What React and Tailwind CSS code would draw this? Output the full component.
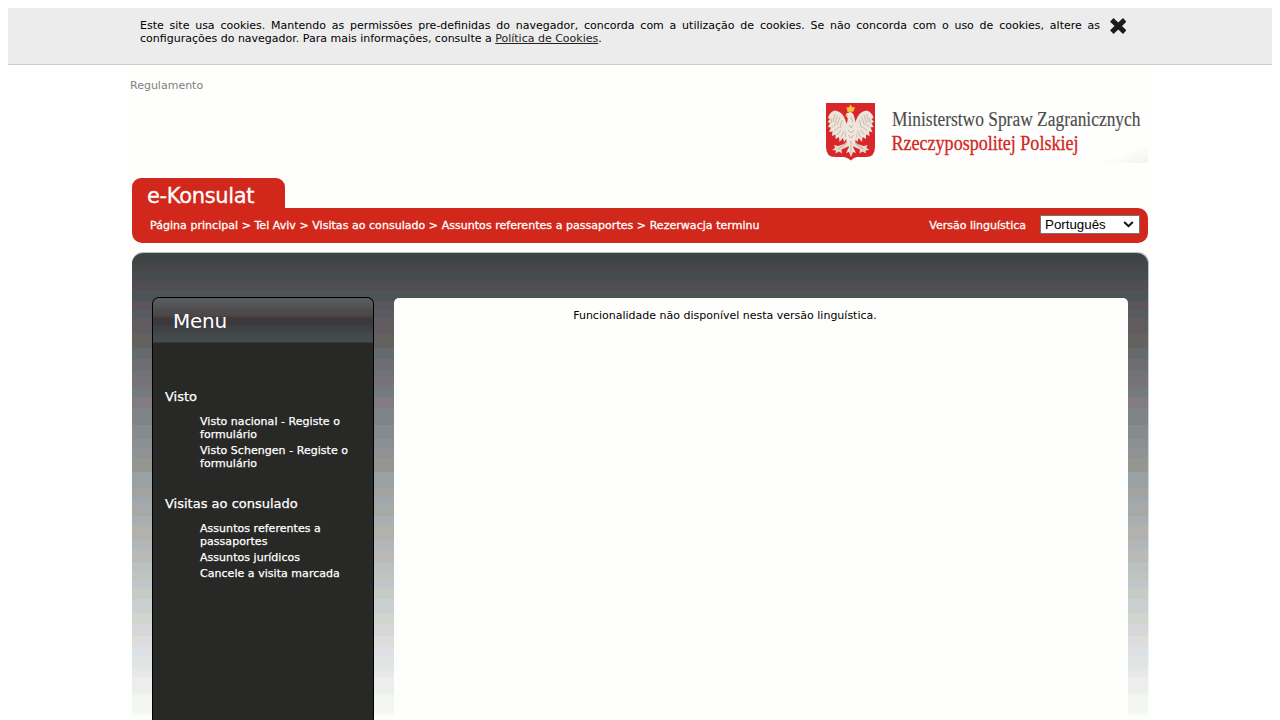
import React from "react";

const BANDS = [
  [253, "#3e4345"], [261, "#424648"], [265, "#4a4645"], [269, "#444a4b"], [273, "#474d4e"],
  [281, "#514d50"], [290, "#4e5456"], [301, "#5a565b"], [310, "#565c5f"], [318, "#605c5f"],
  [334, "#63625e"], [348, "#646a6d"], [359, "#6b6f72"], [363, "#706d72"], [370, "#6e7376"],
  [377, "#777378"], [387, "#747b7d"], [397, "#827c82"], [408, "#7f8586"], [425, "#868c8e"],
  [439, "#8b9092"], [448, "#909396"], [458, "#959690"], [472, "#9aa1a3"], [487, "#a2a39e"],
  [496, "#9fa6a9"], [501, "#a3a9ad"], [508, "#a8a9a5"], [516, "#a8aeb1"], [525, "#b1b2ae"],
  [540, "#b0b7bb"], [549, "#b9bab6"], [562, "#bbc1c3"], [571, "#c1c3be"], [580, "#c0c6c9"],
  [588, "#c8cac6"], [599, "#cacfd1"], [613, "#d2d4d0"], [624, "#d2d7da"], [628, "#d9d6db"],
  [636, "#dbddd9"], [643, "#e0dde2"], [649, "#dce2e5"], [657, "#e2e4e0"], [667, "#e2e8ea"],
  [672, "#e9e7ec"], [677, "#eceeeb"], [693, "#ebf2f5"], [695, "#f4f7f1"], [713, "#f6fcff"],
  [716, "#fefefc"], [720, "#fefefc"],
];

const panelGradient =
  "linear-gradient(to bottom, " +
  BANDS.slice(0, -1)
    .map(([y, c], i) => `${c} ${y - 253}px ${BANDS[i + 1][0] - 253}px`)
    .join(", ") +
  ")";

const MENU = [
  {
    title: "Visto",
    items: ["Visto nacional - Registe o formulário", "Visto Schengen - Registe o formulário"],
  },
  {
    title: "Visitas ao consulado",
    items: ["Assuntos referentes a passaportes", "Assuntos jurídicos", "Cancele a visita marcada"],
  },
];

function Wing() {
  return (
    <g>
      <path
        d="M23 27C21 22 20 18 18 14C16 10 13 8 9 7.500C5 8.500 3 11 2 15L4 16L1.500 19L4 20L2 24L5 24.500L3 29L6.500 28.500L6 33L9.500 31.500L9.500 36L13 34L13.500 39L17 35L18 39L21 35L23 36Z"
        fill="#ece4da"
      />
      <path
        d="M6 15L5 20M9 11L7 19M11.500 12L9 20M14 14L11 22M16 17L14 25M6 24L10 21M8 28L13 24M11 32L15 27M15 34L18 28M19 34L20 29"
        fill="none"
        stroke="#bda898"
        strokeWidth=".7"
      />
      <path d="M22 37L18 41L12 43L8 42L9 45L6 47L10 47.500L9.500 50.500L13 48.500L16 50.500L15.500 46.500L20 44.500L23.500 43Z" fill="#e5dbcf" />
      <path d="M21 39L17 43L12 46" fill="none" stroke="#b08b77" strokeWidth=".7" />
    </g>
  );
}

function MinistryLogo() {
  return (
    <svg width="326" height="62" viewBox="0 0 326 62" className="block">
      <defs>
        <linearGradient id="corner" x1="0.35" y1="0.2" x2="1" y2="1">
          <stop offset="0.5" stopColor="#fefefc" />
          <stop offset="1" stopColor="#f2f2f0" />
        </linearGradient>
      </defs>
      <path d="M326 32V60H262Q310 58 326 32Z" fill="url(#corner)" />
      <g transform="translate(4 0)">
        <path d="M0 0H49V44Q49 54 40 54H31Q27 54.500 25 57.500Q22 54.500 18 54H9Q0 54 0 44Z" fill="#d9262b" />
        <Wing />
        <g transform="translate(49.500 0) scale(-1 1)">
          <Wing />
        </g>
        <path
          d="M22 10C20 10 19 12 21 14C23 17 20 20 20 25V35C20 38 22 41 23 44L20 50L23 49L25 54L27 49L30 50L27 44C28 41 30 38 30 35V24C30 19 29 17 28 13C27 9 24 8 22 10Z"
          fill="#eee6dc"
        />
        <path d="M23 22L25 25L27 22M22 27L25 30L28 27M22 32L25 35L28 32M25 38V50M25 14L27 19" fill="none" stroke="#bda595" strokeWidth=".8" />
        <path d="M21.500 9L20.500 4L22.500 4.800L24.500 1.500L26.500 4.500L29 4L27.500 8.500Z" fill="#f3c63f" />
        <path d="M20.500 11L18.800 13.500L22 13Z" fill="#e6b93c" />
      </g>
      <g fontFamily="'Liberation Serif', serif" fontSize="20">
        <text x="70" y="23" textLength="248.500" lengthAdjust="spacingAndGlyphs" fill="#4c4c4e" stroke="#4c4c4e" strokeWidth=".15">
          Ministerstwo Spraw Zagranicznych
        </text>
        <text x="69.500" y="47" textLength="187" lengthAdjust="spacingAndGlyphs" fill="#d3261f" stroke="#d3261f" strokeWidth=".3">
          Rzeczypospolitej Polskiej
        </text>
      </g>
    </svg>
  );
}

function CookieBar() {
  return (
    <div className="mx-2 h-[57px] border-b border-[#ccc] bg-[#ececec]">
      <div className="mx-auto flex w-[1000px] pt-[11px]">
        <p className="w-[960px] shrink-0 text-justify text-black">
          Este site usa cookies. Mantendo as permissões pre-definidas do navegador, concorda com a utilização de
          cookies. Se não concorda com o uso de cookies, altere as configurações do navegador. Para mais
          informações, consulte a <a className="text-[#222] underline">Política de Cookies</a>.
        </p>
        <svg width="16" height="16" viewBox="0 0 16 16" className="mt-[-1px] ml-2.5 shrink-0">
          <path d="M3.600 3.600L12.900 12.400M12.900 3.600L3.600 12.400" stroke="#1b1b1b" strokeWidth="5" strokeLinecap="square" />
        </svg>
      </div>
    </div>
  );
}

function RedHeader() {
  return (
    <div className="ml-1 w-[1016px] text-white">
      <div className="h-[30px] w-[153px] rounded-t-[9px] bg-[#d2271b] pt-[5px] pl-[15px] text-[21px] leading-[26px] tracking-[-0.35px] [-webkit-text-stroke:0.3px_white]">
        e-Konsulat
      </div>
      <div className="flex h-[35px] items-center justify-between rounded-r-[10px] rounded-bl-[10px] bg-[#d2271b] pr-2 pl-[18px]">
        <span className="tracking-[0.038px] [-webkit-text-stroke:0.3px_white]">
          Página principal &gt; Tel Aviv &gt; Visitas ao consulado &gt; Assuntos referentes a passaportes &gt;
          Rezerwacja terminu
        </span>
        <div className="flex items-center">
          <span className="[-webkit-text-stroke:0.3px_white]">Versão linguística</span>
          <div className="mt-[-2px] ml-3.5 flex h-[19px] w-[100px] items-center justify-between border border-[#767676] bg-white pr-[5px] pl-1 font-['Liberation_Sans',sans-serif] text-[13.333px] text-black">
            <span>Português</span>
            <svg width="11" height="7" viewBox="0 0 11 7">
              <path d="M1.200 1L5.500 5.200L9.800 1" fill="none" stroke="#111" strokeWidth="2" />
            </svg>
          </div>
        </div>
      </div>
    </div>
  );
}

function Sidebar() {
  return (
    <div className="h-[424px] w-[222px] rounded-t-[7px] border border-b-0 border-black bg-[#282826] text-white">
      <div className="h-[45px] rounded-t-[6px] border-b border-[#383a39] bg-[linear-gradient(to_bottom,#5b5a5c_0px,#5b5a5c_4px,#565759_5px,#545456_8px,#504d50_11px,#4d4a48_15px,#484648_18px,#43393b_20px,#3c383d_22px,#3c383d_26px,#3d3f42_28px,#404547_35px,#454a4c_37px,#454a4c_44px)] pt-[10px] pl-5 text-[20px] leading-[26px] tracking-[-0.25px]">
        Menu
      </div>
      <div className="pt-[46px] [-webkit-text-stroke:0.25px_white]">
        {MENU.map((group) => (
          <div key={group.title} className="mb-[26px] pl-3">
            <div className="text-[13px] leading-4">{group.title}</div>
            <ul className="mt-[10px] box-content w-[160px] pl-[35px] tracking-[0.04px]">
              {group.items.map((item) => (
                <li key={item} className="mb-[3px]">
                  {item}
                </li>
              ))}
            </ul>
          </div>
        ))}
      </div>
    </div>
  );
}

export default function App() {
  return (
    <div className="h-[720px] overflow-hidden bg-white pt-2 font-['DejaVu_Sans',sans-serif] text-[11px] leading-[13px]">
      <CookieBar />
      <div className="mx-auto h-[655px] w-[1024px] bg-[#fefefc]">
        <div className="h-[38px] pt-[14px] pl-0.5 text-[#808080]">Regulamento</div>
        <div className="flex h-[75px] justify-end pr-1">
          <MinistryLogo />
        </div>
        <RedHeader />
        <div className="mt-[9px] ml-1 w-[1017px] rounded-t-[11px] bg-[linear-gradient(to_bottom,#b9c3c7,#d8d8dc_250px,#fefefc_460px)] pt-px pr-px">
          <div
            className="flex h-[467px] items-start gap-5 rounded-t-[11px] px-5 pt-11"
            style={{ backgroundImage: panelGradient }}
          >
            <Sidebar />
            <main className="mt-px h-[422px] w-[734px] rounded-t-[5px] bg-[#fefefc] pt-[11px] pr-[72px] text-center text-black">
              Funcionalidade não disponível nesta versão linguística.
            </main>
          </div>
        </div>
      </div>
    </div>
  );
}
